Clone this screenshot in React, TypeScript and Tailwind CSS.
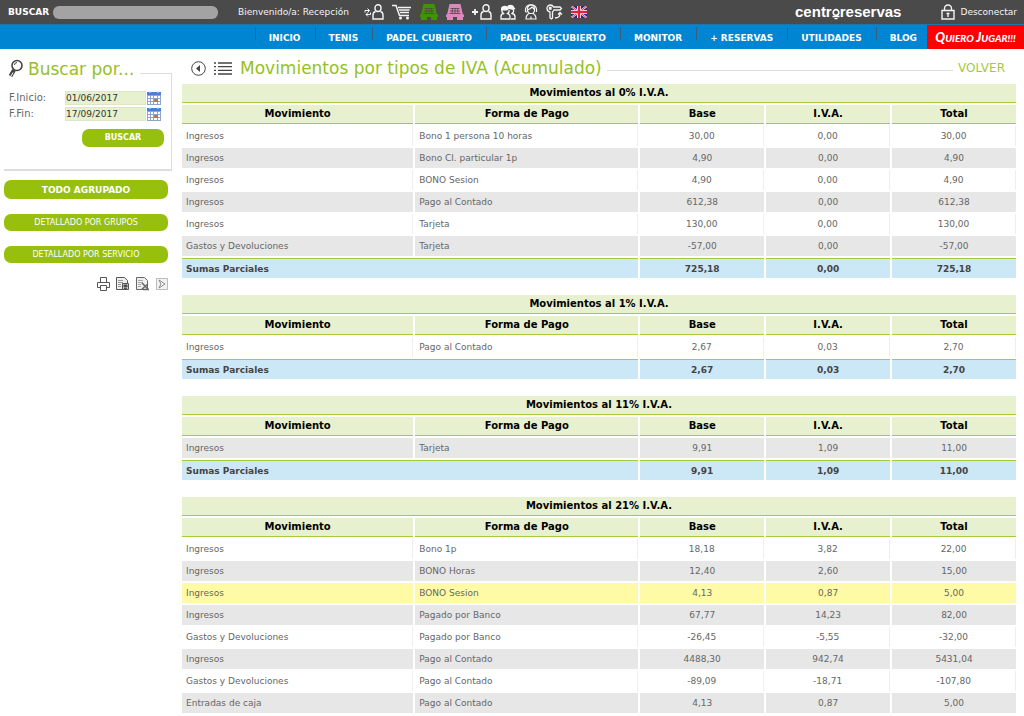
import type { ReactNode } from "react";

type Row = { tipo: string; pago: string; base: string; iva: string; total: string; hover?: boolean };

type Grupo = {
    titulo: string;
    rows: Row[];
    // first row shade changes from one block to the next
    start?: number;
    suma?: [string, string, string];
};

const row = (tipo: string, pago: string, base: string, iva: string, total: string, hover = false): Row => ({
    tipo, pago, base, iva, total, hover,
});

const GRUPOS: Grupo[] = [
    {
        titulo: "Movimientos al 0% I.V.A.",
        rows: [
            row("Ingresos", "Bono 1 persona 10 horas", "30,00", "0,00", "30,00"),
            row("Ingresos", "Bono Cl. particular 1p", "4,90", "0,00", "4,90"),
            row("Ingresos", "BONO Sesion", "4,90", "0,00", "4,90"),
            row("Ingresos", "Pago al Contado", "612,38", "0,00", "612,38"),
            row("Ingresos", "Tarjeta", "130,00", "0,00", "130,00"),
            row("Gastos y Devoluciones", "Tarjeta", "-57,00", "0,00", "-57,00"),
        ],
        suma: ["725,18", "0,00", "725,18"],
    },
    {
        titulo: "Movimientos al 1% I.V.A.",
        rows: [row("Ingresos", "Pago al Contado", "2,67", "0,03", "2,70")],
        suma: ["2,67", "0,03", "2,70"],
    },
    {
        titulo: "Movimientos al 11% I.V.A.",
        start: 1,
        rows: [row("Ingresos", "Tarjeta", "9,91", "1,09", "11,00")],
        suma: ["9,91", "1,09", "11,00"],
    },
    {
        titulo: "Movimientos al 21% I.V.A.",
        rows: [
            row("Ingresos", "Bono 1p", "18,18", "3,82", "22,00"),
            row("Ingresos", "BONO Horas", "12,40", "2,60", "15,00"),
            row("Ingresos", "BONO Sesion", "4,13", "0,87", "5,00", true),
            row("Ingresos", "Pagado por Banco", "67,77", "14,23", "82,00"),
            row("Gastos y Devoluciones", "Pagado por Banco", "-26,45", "-5,55", "-32,00"),
            row("Ingresos", "Pago al Contado", "4488,30", "942,74", "5431,04"),
            row("Gastos y Devoluciones", "Pago al Contado", "-89,09", "-18,71", "-107,80"),
            row("Entradas de caja", "Pago al Contado", "4,13", "0,87", "5,00"),
        ],
    },
];

const MENU = ["INICIO", "TENIS", "PADEL CUBIERTO", "PADEL DESCUBIERTO", "MONITOR", "+ RESERVAS", "UTILIDADES", "BLOG"];

const Court = () => (
    <svg width="18" height="16" viewBox="0 0 18 16" fill="currentColor">
        <path d="M3.5 0h11L17 11H1z" />
        <path d="M0 10.5h18V13H0zM1 13h6v3H1zM11 13h6v3h-6z" />
        <path d="M4.5 4.5h9M4 7h10M3.5 9.5h11M6.5 4.5L6 9.5M9 4.5v5M11.5 4.5l.5 5" stroke="#4a4a4a" strokeWidth=".8" fill="none" />
    </svg>
);

const User = () => (
    <g transform="translate(8 0)">
        <rect x="3" y=".8" width="6" height="6.7" rx="3" />
        <path d="M3.5 7.5C1.8 8 1 9 1 11v4h10v-4c0-2-.8-3-2.5-3.5" />
    </g>
);

const TOOLS: { label: string; color: string; icon: ReactNode }[] = [
    {
        label: "Cambiar usuario",
        color: "text-gray-100",
        icon: (
            <svg width="20" height="16" viewBox="0 0 20 16" fill="none" stroke="currentColor" strokeWidth="1.4">
                <User />
                <path d="M1 8.5V6.500h4.500M3.500 4.500l2 2-2 2M6.500 8.500v2H2M4 8.500l-2 2 2 2" strokeWidth="1" />
            </svg>
        ),
    },
    {
        label: "Carrito",
        color: "text-gray-100",
        icon: (
            <svg width="20" height="16" viewBox="0 0 20 16" fill="none" stroke="currentColor" strokeWidth="1.5">
                <path d="M0 1.5h4l3.5 10H17M6 3.5h13M7 6h10.5M8 8.5h9" />
                <circle cx="8.5" cy="14" r="1.5" fill="currentColor" stroke="none" />
                <circle cx="15.5" cy="14" r="1.5" fill="currentColor" stroke="none" />
            </svg>
        ),
    },
    { label: "Pistas libres", color: "text-[#3f9305]", icon: <Court /> },
    { label: "Pistas ocupadas", color: "text-[#d98abb]", icon: <Court /> },
    {
        label: "Nuevo usuario",
        color: "text-gray-100",
        icon: (
            <svg width="20" height="16" viewBox="0 0 20 16" fill="none" stroke="currentColor" strokeWidth="1.4">
                <User />
                <path d="M0 8h6M3 5v6" strokeWidth="1.8" />
            </svg>
        ),
    },
    {
        label: "Grupos",
        color: "text-gray-100",
        icon: (
            <svg width="16" height="16" viewBox="0 0 16 16" fill="none" stroke="currentColor" strokeWidth="1.3">
                <path d="M1 4.5C1 2 5 1 7.5 2.5 8 0 13.5 0 14 3L15.5 5l-2.5 1L9 5 7 6.5H1z" fill="currentColor" stroke="none" />
                <path d="M2 6v2l1.500 1.500C1.500 10 1 11 1 12.500V15h9v-2.500c0-1.500-.5-2.500-2.500-3L9 8V6M13.500 5.500V8L12 9.500c2 .5 3 1.500 3 3V15h-4" />
            </svg>
        ),
    },
    {
        label: "Soporte",
        color: "text-gray-100",
        icon: (
            <svg width="14" height="16" viewBox="0 0 14 16" fill="none" stroke="currentColor" strokeWidth="1.2">
                <path d="M3.5 7V4.500a3.500 3.500 0 0 1 7 0V7L9 9.500H5.500zM3.500 6l3-1.500L8 3l2.500 2.500" />
                <path d="M1.500 8V5C2 2 4 .8 7 .8s5 1.200 5.500 4.200v3M1.500 8h2" />
                <path d="M5 9.500C3 10.500 2 12 2 15h10c0-3-1-4.500-3-5.500M7 12.500v2" />
            </svg>
        ),
    },
    {
        label: "Accesos",
        color: "text-gray-100",
        icon: (
            <svg width="17" height="16" viewBox="0 0 17 16" fill="none" stroke="currentColor" strokeWidth="1.3">
                <path d="M7.500 3H14l1.500 1.500L14 6H8C7.500 7 7 7.500 6.500 8v6L5.500 15l-1.500-1V8C2 7.500 1 6 1 4.500 1 2.500 2.500 1 4.500 1S7 2 7.500 3z" />
                <path d="M3.500 3.500h1.500v1.500H3.500zM9 14c3 0 5-1.500 5-4.500M12 10.500l2-2 2 2" />
            </svg>
        ),
    },
    {
        label: "English",
        color: "text-white",
        icon: (
            <svg width="16" height="12" viewBox="0 0 16 12">
                <path d="M0 0h16v12H0z" fill="#26268c" />
                <path d="M0 0l16 12M16 0L0 12" stroke="#fff" strokeWidth="2" />
                <path d="M0 0l16 12M16 0L0 12" stroke="#e0203c" strokeWidth="1" />
                <path d="M8 0v12M0 6h16" stroke="#fff" strokeWidth="4" />
                <path d="M8 0v12M0 6h16" stroke="#e0203c" strokeWidth="2.4" />
            </svg>
        ),
    },
];

function TopBar() {
    return (
        <header className="flex h-6 items-center bg-[#4a4a4a] pl-2 pr-[7px] text-[9px] text-gray-100">
            <label htmlFor="buscar" className="w-[45px] font-bold text-white">BUSCAR</label>
            <input id="buscar" type="text" className="h-[13px] w-[165px] rounded-md bg-[#a3a3a3] px-1 outline-none" />
            <span className="ml-5 w-[118px] whitespace-nowrap">Bienvenido/a: Recepción</span>
            <div className="ml-2 flex items-center gap-[8px]">
                {TOOLS.map((t) => (
                    <button key={t.label} type="button" aria-label={t.label} className={t.color}>
                        {t.icon}
                    </button>
                ))}
            </div>
            <div className="ml-auto flex items-center font-['Liberation_Sans'] text-[15px] font-bold leading-4 text-white">
                <span>centr</span>
                <svg width="8" height="16" viewBox="0 0 8 16" fill="none">
                    <circle cx="4" cy="8.5" r="2.8" stroke="#fff" strokeWidth="1.7" />
                    <path d="M.5 12.5h7M2.5 14.7h3" stroke="#fff" strokeWidth="1.3" />
                </svg>
                <span>reservas</span>
            </div>
            <a href="#salir" className="ml-10 flex items-center gap-[5px]">
                <svg width="14" height="16" viewBox="0 0 14 16" fill="none" stroke="currentColor" strokeWidth="1.4">
                    <path d="M3.5 6V4.500a3.500 3.500 0 0 1 7 0V6M1 6.500h12V15H1zM7 9v4M5.500 9.500h3" />
                </svg>
                Desconectar
            </a>
        </header>
    );
}

function NavBar() {
    return (
        <nav className="flex h-[25px] justify-end border-t border-[#1c77ad] bg-[#0085d2] text-[9px] font-bold text-white">
            <ul className="flex">
                {MENU.map((m) => (
                    <li key={m} className="flex">
                        <span className="mt-[2px] h-[13px] w-px bg-[#3f5f78]" />
                        <a href="#" className="pl-[13px] pr-[14px] pt-[6px]">{m}</a>
                    </li>
                ))}
            </ul>
            <a
                href="#jugar"
                className="-ml-1 flex w-[97px] items-center justify-center whitespace-nowrap bg-[#f00] font-['Lato'] text-[10px] font-black uppercase italic"
            >
                <span><span className="text-[13px]">Q</span>uiero <span className="text-[13px]">J</span>ugar!!!</span>
            </a>
        </nav>
    );
}

function Fecha({ id, label, value }: { id: string; label: string; value: string }) {
    return (
        <div className="flex h-4 items-center">
            <label htmlFor={id} className="w-14">{label}</label>
            <input id={id} type="text" defaultValue={value} className="h-[14px] w-[81px] border border-[#dfe6c8] bg-[#e8f1cf] text-[9px] text-[#333] outline-none" />
            <button type="button" aria-label="Calendario" className="ml-px">
                <svg width="14" height="14" viewBox="0 0 14 14">
                    <path d="M0 1h14v13H0z" fill="#8da6cc" />
                    <path d="M0 1h14v3H0z" fill="#4a7fd6" />
                    <path d="M3 0v2M11 0v2" stroke="#dbe6f7" />
                    <path d="M1 5h2v2H1zM4 5h2v2H4zM7 5h3v2H7zM11 5h2v2h-2zM1 8h2v2H1zM4 8h2v2H4zM1 11h2v2H1zM4 11h2v2H4zM7 11h3v2H7zM11 11h2v2h-2zM11 8h2v2h-2z" fill="#fff" />
                    <path d="M7 8h4v3H7z" fill="#e8643c" />
                </svg>
            </button>
        </div>
    );
}

function Sidebar() {
    return (
        <aside className="w-[172px] shrink-0 pl-1">
            <form onSubmit={(e) => e.preventDefault()}>
                <div className="flex h-[38px] items-center">
                    <svg className="ml-1 mr-[5px]" width="15" height="20" viewBox="0 0 15 20" fill="none" stroke="#444">
                        <circle cx="9" cy="6.5" r="5" strokeWidth="1.6" />
                        <path d="M6.5 6a2.500 2.500 0 0 1 2.500-2.500" />
                        <path d="M6 11l-3.500 6" strokeWidth="4" />
                        <path d="M5 13.5l-2 3.500" stroke="#fff" strokeWidth="1" />
                    </svg>
                    <h2 className="text-[17px] leading-6 text-[#95c11f]">Buscar por...</h2>
                    <span className="ml-[6px] mt-[23px] h-px flex-1 self-start bg-[#ddd]" />
                </div>
                {/* the frame starts level with the rule beside the heading */}
                <div className="-mt-[14px] h-[97px] border-b-2 border-r border-[#ddd] pl-[5px] pt-4">
                    <Fecha id="inicio" label="F.Inicio:" value="01/06/2017" />
                    <Fecha id="fin" label="F.Fin:" value="17/09/2017" />
                    <button type="submit" className="ml-[73px] mt-[7px] h-[18px] w-[82px] rounded-[7px] bg-[#97bf0d] text-[8px] font-bold text-white">
                        BUSCAR
                    </button>
                </div>
            </form>
            <div className="mr-1 mt-[9px] flex flex-col text-[8px] text-white">
                <button type="button" className="h-[19px] rounded-[7px] bg-[#97bf0d] text-[9px] font-bold">TODO AGRUPADO</button>
                <button type="button" className="mt-[15px] h-[17px] rounded-[7px] bg-[#97bf0d]">DETALLADO POR GRUPOS</button>
                <button type="button" className="mt-[15px] h-[17px] rounded-[7px] bg-[#97bf0d]">DETALLADO POR SERVICIO</button>
            </div>
            <div className="mr-1 mt-[14px] flex justify-end gap-[6px]">
                <button type="button" aria-label="Imprimir">
                    <svg width="13" height="14" viewBox="0 0 13 14" fill="#fff" stroke="#555">
                        <path d="M3.5 5V.5h6V5M.5 5.500h12v5H.5z" />
                        <path d="M3.5 8.500h6v5h-6z" />
                    </svg>
                </button>
                <button type="button" aria-label="Guardar">
                    <svg width="14" height="14" viewBox="0 0 14 14" fill="#eee" stroke="#555">
                        <path d="M.5.5h8l3 3v9H.5z" />
                        <path d="M2 3.500h5M2 5.500h5M2 7.500h3M2 9.500h3" stroke="#999" />
                        <path d="M6.500 6.500h6v6h-6z" fill="#ccc" />
                        <path d="M8 8h3v2H8zM8 11.500h3" fill="#444" />
                    </svg>
                </button>
                <button type="button" aria-label="Exportar">
                    <svg width="14" height="14" viewBox="0 0 14 14" fill="#eee" stroke="#666">
                        <path d="M.5.5h8l3 3v9H.5z" />
                        <path d="M2 3.500h5M2 5.500h5M2 7.500h3M2 9.500h3" stroke="#aaa" />
                        <path d="M6 6l6 6M12 7l-6 5M7 12.500h6" strokeWidth="1.5" />
                    </svg>
                </button>
                <button type="button" aria-label="Enviar">
                    <svg width="12" height="14" viewBox="0 0 12 14" fill="#f2f2f2" stroke="#bbb">
                        <path d="M.5 1.500h11v11H.5z" />
                        <path d="M3 3l6 4-6 4 2-4z" fill="#fff" stroke="#888" />
                    </svg>
                </button>
            </div>
        </aside>
    );
}

function Tabla({ grupo }: { grupo: Grupo }) {
    const start = grupo.start ?? 0;
    return (
        <table className="mb-[13px] w-full table-fixed border-separate border-spacing-[2px] text-[9px]">
            <colgroup>
                <col className="w-[28%]" />
                <col className="w-[27%]" />
                <col className="w-[15%]" />
                <col className="w-[15%]" />
                <col className="w-[15%]" />
            </colgroup>
            <thead className="text-[10px] text-black">
                <tr>
                    <th colSpan={5} className="h-[19px] border-b border-[#a5cd39] bg-[#e8f1cf] p-0">{grupo.titulo}</th>
                </tr>
                <tr>
                    {["Movimiento", "Forma de Pago", "Base", "I.V.A.", "Total"].map((h) => (
                        <th key={h} className="h-[19px] border-b border-[#a5cd39] bg-[#e8f1cf] p-0">{h}</th>
                    ))}
                </tr>
            </thead>
            <tbody>
                {grupo.rows.map((r, i) => {
                    let bg = (i + start) % 2 ? "bg-[#e7e7e7]" : "bg-white border-r border-[#eee]";
                    if (r.hover) bg = "bg-[#fffaa5]";
                    return (
                        <tr key={i}>
                            <td className={`h-5 px-1 py-0 ${bg}`}>{r.tipo}</td>
                            <td className={`h-5 px-1 py-0 ${bg}`}>{r.pago}</td>
                            <td className={`h-5 p-0 text-center ${bg}`}>{r.base}</td>
                            <td className={`h-5 p-0 text-center ${bg}`}>{r.iva}</td>
                            <td className={`h-5 p-0 text-center ${bg}`}>{r.total}</td>
                        </tr>
                    );
                })}
                {grupo.suma && (
                    <tr className="font-bold text-[#444]">
                        <td colSpan={2} className="h-5 border-t border-[#a5cd39] bg-[#cce7f5] px-1 py-0">Sumas Parciales</td>
                        {grupo.suma.map((s, i) => (
                            <td key={i} className="h-5 border-t border-[#a5cd39] bg-[#cce7f5] p-0 text-center">{s}</td>
                        ))}
                    </tr>
                )}
            </tbody>
        </table>
    );
}

export default function App() {
    return (
        <div className="min-h-screen bg-white font-['Verdana','DejaVu_Sans',sans-serif] text-[10px] leading-[14px] text-[#666]">
            <TopBar />
            <NavBar />
            <div className="flex pt-px">
                <Sidebar />
                <main className="ml-2 min-w-0 flex-1 pr-[6px]">
                    <div className="flex h-8 items-center pl-[11px] pr-[13px] pt-1">
                        <button type="button" aria-label="Atrás" className="mr-2">
                            <svg width="15" height="15" viewBox="0 0 15 15" fill="none" stroke="#444">
                                <circle cx="7.5" cy="7.5" r="6.8" />
                                <path d="M9 4v7L5 7.500z" fill="#444" stroke="none" />
                            </svg>
                        </button>
                        <svg className="mr-2" width="18" height="13" viewBox="0 0 18 13" stroke="#444" strokeWidth="1.3">
                            <path d="M0 1h2M4 1h14M0 4.700h2M4 4.700h14M0 8.400h2M4 8.400h14M0 12h2M4 12h14" />
                        </svg>
                        <h1 className="text-[17px] leading-6 text-[#95c11f]">Movimientos por tipos de IVA (Acumulado)</h1>
                        <span className="mx-[5px] mt-1 h-px flex-1 bg-[#ddd]" />
                        <a href="#volver" className="text-xs text-[#a5c93d]">VOLVER</a>
                    </div>
                    {GRUPOS.map((g) => (
                        <Tabla key={g.titulo} grupo={g} />
                    ))}
                </main>
            </div>
        </div>
    );
}
